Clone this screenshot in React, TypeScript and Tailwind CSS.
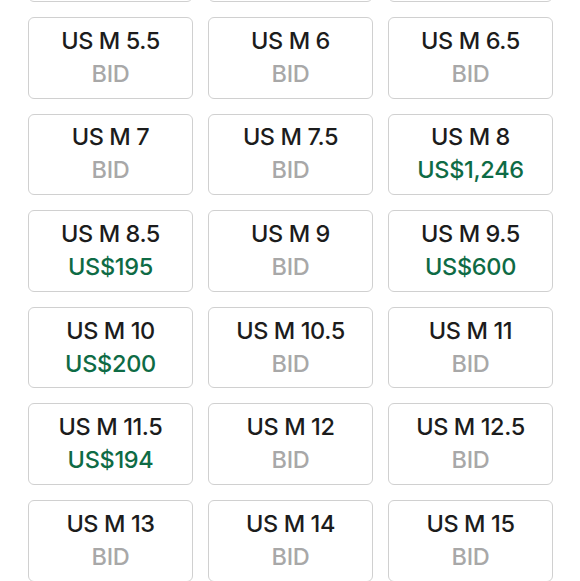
const sizes: { size: string; price?: string }[] = [
  { size: '5.5' },
  { size: '6' },
  { size: '6.5' },
  { size: '7' },
  { size: '7.5' },
  { size: '8', price: 'US$1,246' },
  { size: '8.5', price: 'US$195' },
  { size: '9' },
  { size: '9.5', price: 'US$600' },
  { size: '10', price: 'US$200' },
  { size: '10.5' },
  { size: '11' },
  { size: '11.5', price: 'US$194' },
  { size: '12' },
  { size: '12.5' },
  { size: '13' },
  { size: '14' },
  { size: '15' },
];

export default function App() {
  return (
    <div
      className="h-[581px] w-[580px] overflow-hidden bg-white"
      style={{ fontFamily: 'Inter, "Liberation Sans", sans-serif' }}
    >
      <div className="-mt-[79.6px] grid grid-cols-[165px_165px_165px] gap-x-[15px] gap-y-[15px] pl-[28px]">
        {/* row scrolled out of view above */}
        {[0, 1, 2].map((i) => (
          <div key={i} className="h-[81.6px] rounded-[6px] border border-[#d0d0d0] bg-white" />
        ))}
        {sizes.map((s) => (
          <button
            key={s.size}
            className="flex h-[81.6px] flex-col items-center justify-center rounded-[6px] border border-[#d0d0d0] bg-white pb-[2px]"
          >
            <span className="text-[23.5px] leading-[33px] font-medium tracking-[-0.4px] text-[#1c1c1c]">
              US M {s.size}
            </span>
            {s.price ? (
              <span className="text-[23.5px] leading-[33px] font-medium tracking-[-0.3px] text-[#0e6b45]">
                {s.price}
              </span>
            ) : (
              <span className="text-[23.5px] leading-[33px] font-medium tracking-[-0.3px] text-[#a8a8a8]">BID</span>
            )}
          </button>
        ))}
      </div>
    </div>
  );
}
